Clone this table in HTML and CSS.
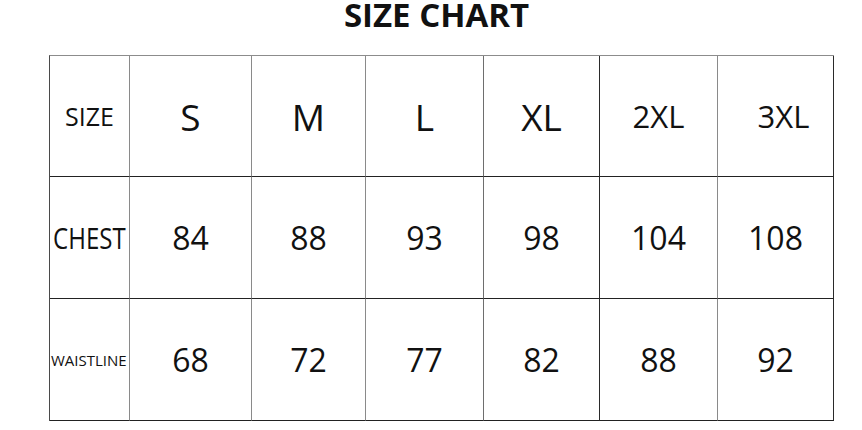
FILE: index.html
```html
<!DOCTYPE html>
<html>
<head>
<meta charset="utf-8">
<link rel="stylesheet" href="styles.css">
</head>
<body>
<div class="page">
  <h1 class="title">SIZE CHART</h1>
  <div class="chart">
    <div class="cell c1 r1 label">SIZE</div>
    <div class="cell c2 r1 big">S</div>
    <div class="cell c3 r1 big">M</div>
    <div class="cell c4 r1 big">L</div>
    <div class="cell c5 r1 big">XL</div>
    <div class="cell c6 r1 mid">2XL</div>
    <div class="cell c7 r1 mid shift">3XL</div>

    <div class="cell c1 r2 label"><span class="squeeze">CHEST</span></div>
    <div class="cell c2 r2 num">84</div>
    <div class="cell c3 r2 num">88</div>
    <div class="cell c4 r2 num">93</div>
    <div class="cell c5 r2 num">98</div>
    <div class="cell c6 r2 num">104</div>
    <div class="cell c7 r2 num">108</div>

    <div class="cell c1 r3 small">WAISTLINE</div>
    <div class="cell c2 r3 num">68</div>
    <div class="cell c3 r3 num">72</div>
    <div class="cell c4 r3 num">77</div>
    <div class="cell c5 r3 num">82</div>
    <div class="cell c6 r3 num">88</div>
    <div class="cell c7 r3 num">92</div>
  </div>
</div>
</body>
</html>
```
FILE: styles.css
```css
html, body {
  margin: 0;
  padding: 0;
  background: #ffffff;
}
body {
  font-family: "Open Sans", "Noto Sans", sans-serif;
  color: #111111;
}
.page {
  width: 785px;
  margin-left: 49px;
}
.title {
  margin: 0;
  height: 55px;
  padding-right: 10px;
  font-size: 33px;
  font-weight: 700;
  line-height: 30px;
  text-align: center;
  color: #111111;
}
.chart {
  display: grid;
  grid-template-columns: 80px 122px 114px 118px 116px 118px 116px;
  grid-template-rows: 121px 122px 122px;
  border-top: 1px solid #8c8c8c;
  border-left: 1px solid #4a4a4a;
}
.cell {
  display: flex;
  align-items: center;
  justify-content: center;
  border-right: 1px solid #333333;
  border-bottom: 1px solid #222222;
  white-space: nowrap;
}
.c1, .c2, .c3, .c6 { border-right-color: #8a8a8a; }
.c4 { border-right-color: #6e6e6e; }
.c5, .c7 { border-right-color: #2a2a2a; }
.label { font-size: 25px; }
.small { font-size: 15px; justify-content: flex-start; padding-left: 1px; }
.squeeze {
  display: inline-block;
  font-size: 30px;
  transform: scaleX(0.8);
}
.big { font-size: 37px; }
.mid { font-size: 31px; }
.shift { padding-left: 16px; }
.num { font-size: 32px; }
```
